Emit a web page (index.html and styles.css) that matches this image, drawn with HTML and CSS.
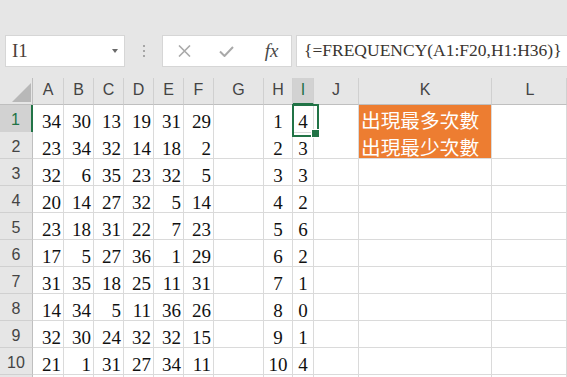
FILE: index.html
```html
<!DOCTYPE html>
<html lang="zh-Hant">
<head>
    <meta charset="UTF-8">
    <meta name="viewport" content="width=device-width, initial-scale=1.0">
    <title>FREQUENCY</title>
    <link rel="stylesheet" href="styles.css">
</head>
<body>
    <div class="formula-bar">
        <div class="name-box">
            <span>I1</span>
            <span class="caret"></span>
        </div>
        <div class="grip"><i></i><i></i><i></i></div>
        <div class="tools">
            <span class="tool">
                <svg width="13" height="12" viewBox="0 0 13 12"><path d="M1 0.5 L12 11.5 M12 0.5 L1 11.5" stroke="#a9a9a9" stroke-width="1.6" fill="none"/></svg>
            </span>
            <span class="tool">
                <svg width="15" height="11" viewBox="0 0 15 11"><path d="M1 5.5 L5.5 10 L14 1" stroke="#a9a9a9" stroke-width="2" fill="none"/></svg>
            </span>
            <span class="tool fx">fx</span>
        </div>
        <div class="formula">{=FREQUENCY(A1:F20,H1:H36)}</div>
    </div>

    <div class="sheet">
        <div class="row head">
            <div class="corner">
                <svg width="33" height="26" viewBox="0 0 33 26"><polygon points="12,24 31,24 31,5" fill="#b8b8b8"/></svg>
            </div>
            <div class="ch">A</div><div class="ch">B</div><div class="ch">C</div><div class="ch">D</div><div class="ch">E</div><div class="ch">F</div>
            <div class="ch">G</div><div class="ch">H</div><div class="ch active">I</div><div class="ch">J</div><div class="ch">K</div><div class="ch">L</div>
        </div>

        <div class="row">
            <div class="rh active">1</div>
            <div class="cell">34</div><div class="cell">30</div><div class="cell">13</div><div class="cell">19</div><div class="cell">31</div><div class="cell">29</div>
            <div class="cell"></div><div class="cell mid">1</div><div class="cell mid selected">4</div><div class="cell"></div>
            <div class="cell note top">出現最多次數</div><div class="cell"></div>
        </div>
        <div class="row">
            <div class="rh">2</div>
            <div class="cell">23</div><div class="cell">34</div><div class="cell">32</div><div class="cell">14</div><div class="cell">18</div><div class="cell">2</div>
            <div class="cell"></div><div class="cell mid">2</div><div class="cell mid">3</div><div class="cell"></div>
            <div class="cell note">出現最少次數</div><div class="cell"></div>
        </div>
        <div class="row">
            <div class="rh">3</div>
            <div class="cell">32</div><div class="cell">6</div><div class="cell">35</div><div class="cell">23</div><div class="cell">32</div><div class="cell">5</div>
            <div class="cell"></div><div class="cell mid">3</div><div class="cell mid">3</div><div class="cell"></div>
            <div class="cell"></div><div class="cell"></div>
        </div>
        <div class="row">
            <div class="rh">4</div>
            <div class="cell">20</div><div class="cell">14</div><div class="cell">27</div><div class="cell">32</div><div class="cell">5</div><div class="cell">14</div>
            <div class="cell"></div><div class="cell mid">4</div><div class="cell mid">2</div><div class="cell"></div>
            <div class="cell"></div><div class="cell"></div>
        </div>
        <div class="row">
            <div class="rh">5</div>
            <div class="cell">23</div><div class="cell">18</div><div class="cell">31</div><div class="cell">22</div><div class="cell">7</div><div class="cell">23</div>
            <div class="cell"></div><div class="cell mid">5</div><div class="cell mid">6</div><div class="cell"></div>
            <div class="cell"></div><div class="cell"></div>
        </div>
        <div class="row">
            <div class="rh">6</div>
            <div class="cell">17</div><div class="cell">5</div><div class="cell">27</div><div class="cell">36</div><div class="cell">1</div><div class="cell">29</div>
            <div class="cell"></div><div class="cell mid">6</div><div class="cell mid">2</div><div class="cell"></div>
            <div class="cell"></div><div class="cell"></div>
        </div>
        <div class="row">
            <div class="rh">7</div>
            <div class="cell">31</div><div class="cell">35</div><div class="cell">18</div><div class="cell">25</div><div class="cell">11</div><div class="cell">31</div>
            <div class="cell"></div><div class="cell mid">7</div><div class="cell mid">1</div><div class="cell"></div>
            <div class="cell"></div><div class="cell"></div>
        </div>
        <div class="row">
            <div class="rh">8</div>
            <div class="cell">14</div><div class="cell">34</div><div class="cell">5</div><div class="cell">11</div><div class="cell">36</div><div class="cell">26</div>
            <div class="cell"></div><div class="cell mid">8</div><div class="cell mid">0</div><div class="cell"></div>
            <div class="cell"></div><div class="cell"></div>
        </div>
        <div class="row">
            <div class="rh">9</div>
            <div class="cell">32</div><div class="cell">30</div><div class="cell">24</div><div class="cell">32</div><div class="cell">32</div><div class="cell">15</div>
            <div class="cell"></div><div class="cell mid">9</div><div class="cell mid">1</div><div class="cell"></div>
            <div class="cell"></div><div class="cell"></div>
        </div>
        <div class="row">
            <div class="rh">10</div>
            <div class="cell">21</div><div class="cell">1</div><div class="cell">31</div><div class="cell">27</div><div class="cell">34</div><div class="cell">11</div>
            <div class="cell"></div><div class="cell mid">10</div><div class="cell mid">4</div><div class="cell"></div>
            <div class="cell"></div><div class="cell"></div>
        </div>
        <div class="row">
            <div class="rh"></div>
            <div class="cell"></div><div class="cell"></div><div class="cell"></div><div class="cell"></div><div class="cell"></div><div class="cell"></div>
            <div class="cell"></div><div class="cell"></div><div class="cell"></div><div class="cell"></div>
            <div class="cell"></div><div class="cell"></div>
        </div>
    </div>
</body>
</html>
```

FILE: styles.css
```css
* {
    margin: 0;
    padding: 0;
    box-sizing: border-box;
}

body {
    width: 567px;
    height: 377px;
    overflow: hidden;
    background: #e6e6e6;
    font-family: "Liberation Sans", Arial, sans-serif;
}

/* Formula bar */
.formula-bar {
    display: flex;
    align-items: flex-start;
    height: 78px;
    padding: 35px 0 0 5px;
}

.name-box {
    width: 120px;
    height: 32px;
    background: #ffffff;
    border: 1px solid #d6d6d6;
    display: flex;
    align-items: center;
    justify-content: space-between;
    padding: 0 6px 0 6px;
    font-family: "Liberation Serif", serif;
    font-size: 19px;
    color: #4a4038;
}

.caret {
    width: 0;
    height: 0;
    border-left: 3.5px solid transparent;
    border-right: 3.5px solid transparent;
    border-top: 4px solid #6a6a6a;
}

.grip {
    width: 37px;
    height: 32px;
    display: flex;
    flex-direction: column;
    align-items: center;
    justify-content: center;
    gap: 3px;
}

.grip i {
    width: 2px;
    height: 2px;
    background: #a6a6a6;
}

.tools {
    width: 130px;
    height: 32px;
    background: #ffffff;
    border: 1px solid #d6d6d6;
    display: flex;
    align-items: center;
}

.tool {
    width: 43px;
    display: flex;
    justify-content: center;
    align-items: center;
}

.tool.fx {
    font-family: "Liberation Serif", serif;
    font-style: italic;
    font-size: 19px;
    color: #474747;
    padding-left: 4px;
}

.formula {
    flex: 1;
    height: 32px;
    margin-left: 4px;
    background: #ffffff;
    border: 1px solid #d6d6d6;
    border-right: none;
    padding-left: 7px;
    font-family: "Liberation Serif", serif;
    font-size: 17.5px;
    line-height: 29px;
    color: #3a3530;
    white-space: nowrap;
}

/* Sheet grid */
.sheet {
    width: 567px;
    height: 299px;
    overflow: hidden;
}

.row {
    display: grid;
    grid-template-columns: 33px 31px 30px 30px 30px 30px 30px 50px 29px 21px 45px 133px 75px;
    height: 27px;
}

.corner {
    background: #e6e6e6;
    border-right: 1px solid #bfbfbf;
    border-bottom: 1px solid #bfbfbf;
}

.corner svg {
    display: block;
}

.ch {
    background: #e6e6e6;
    border-right: 1px solid #d0d0d0;
    border-bottom: 1px solid #bfbfbf;
    text-align: center;
    font-size: 16px;
    line-height: 24px;
    color: #444444;
}

.ch:last-child {
    padding-left: 2px;
}

.ch.active {
    background: #d2d2d2;
    color: #217346;
    border-bottom: 2px solid #217346;
}

.rh {
    background: #e6e6e6;
    border-right: 1px solid #bfbfbf;
    border-bottom: 1px solid #d0d0d0;
    text-align: center;
    font-size: 16px;
    line-height: 22px;
    padding-top: 4px;
    color: #444444;
}

.rh.active {
    background: #d2d2d2;
    color: #217346;
    border-right: 2px solid #217346;
}

.cell {
    background: #ffffff;
    border-right: 1px solid #dadada;
    border-bottom: 1px solid #dadada;
    font-family: "Liberation Serif", serif;
    font-size: 19px;
    line-height: 21px;
    padding: 6px 2px 0 0;
    text-align: right;
    color: #111111;
    white-space: nowrap;
    overflow: hidden;
}

.cell.mid {
    text-align: center;
    padding-right: 0;
}

.cell.note {
    background: #ed7d31;
    color: #ffffff;
    text-align: left;
    padding: 4px 0 0 2px;
    font-family: "Noto Sans CJK TC", sans-serif;
    font-size: 19.7px;
    line-height: 21px;
    overflow: visible;
}

.cell.note.top {
    border-bottom-color: #ed7d31;
}

/* Active cell outline with fill handle */
.cell.selected {
    position: relative;
    overflow: visible;
}

.cell.selected::after {
    content: '';
    position: absolute;
    left: -1px;
    top: -1px;
    width: 23px;
    height: 29px;
    border: 2px solid #217346;
    z-index: 2;
}

.cell.selected::before {
    content: '';
    position: absolute;
    left: 18px;
    top: 24px;
    width: 7px;
    height: 7px;
    background: #217346;
    border: 1px solid #ffffff;
    z-index: 3;
}
```
